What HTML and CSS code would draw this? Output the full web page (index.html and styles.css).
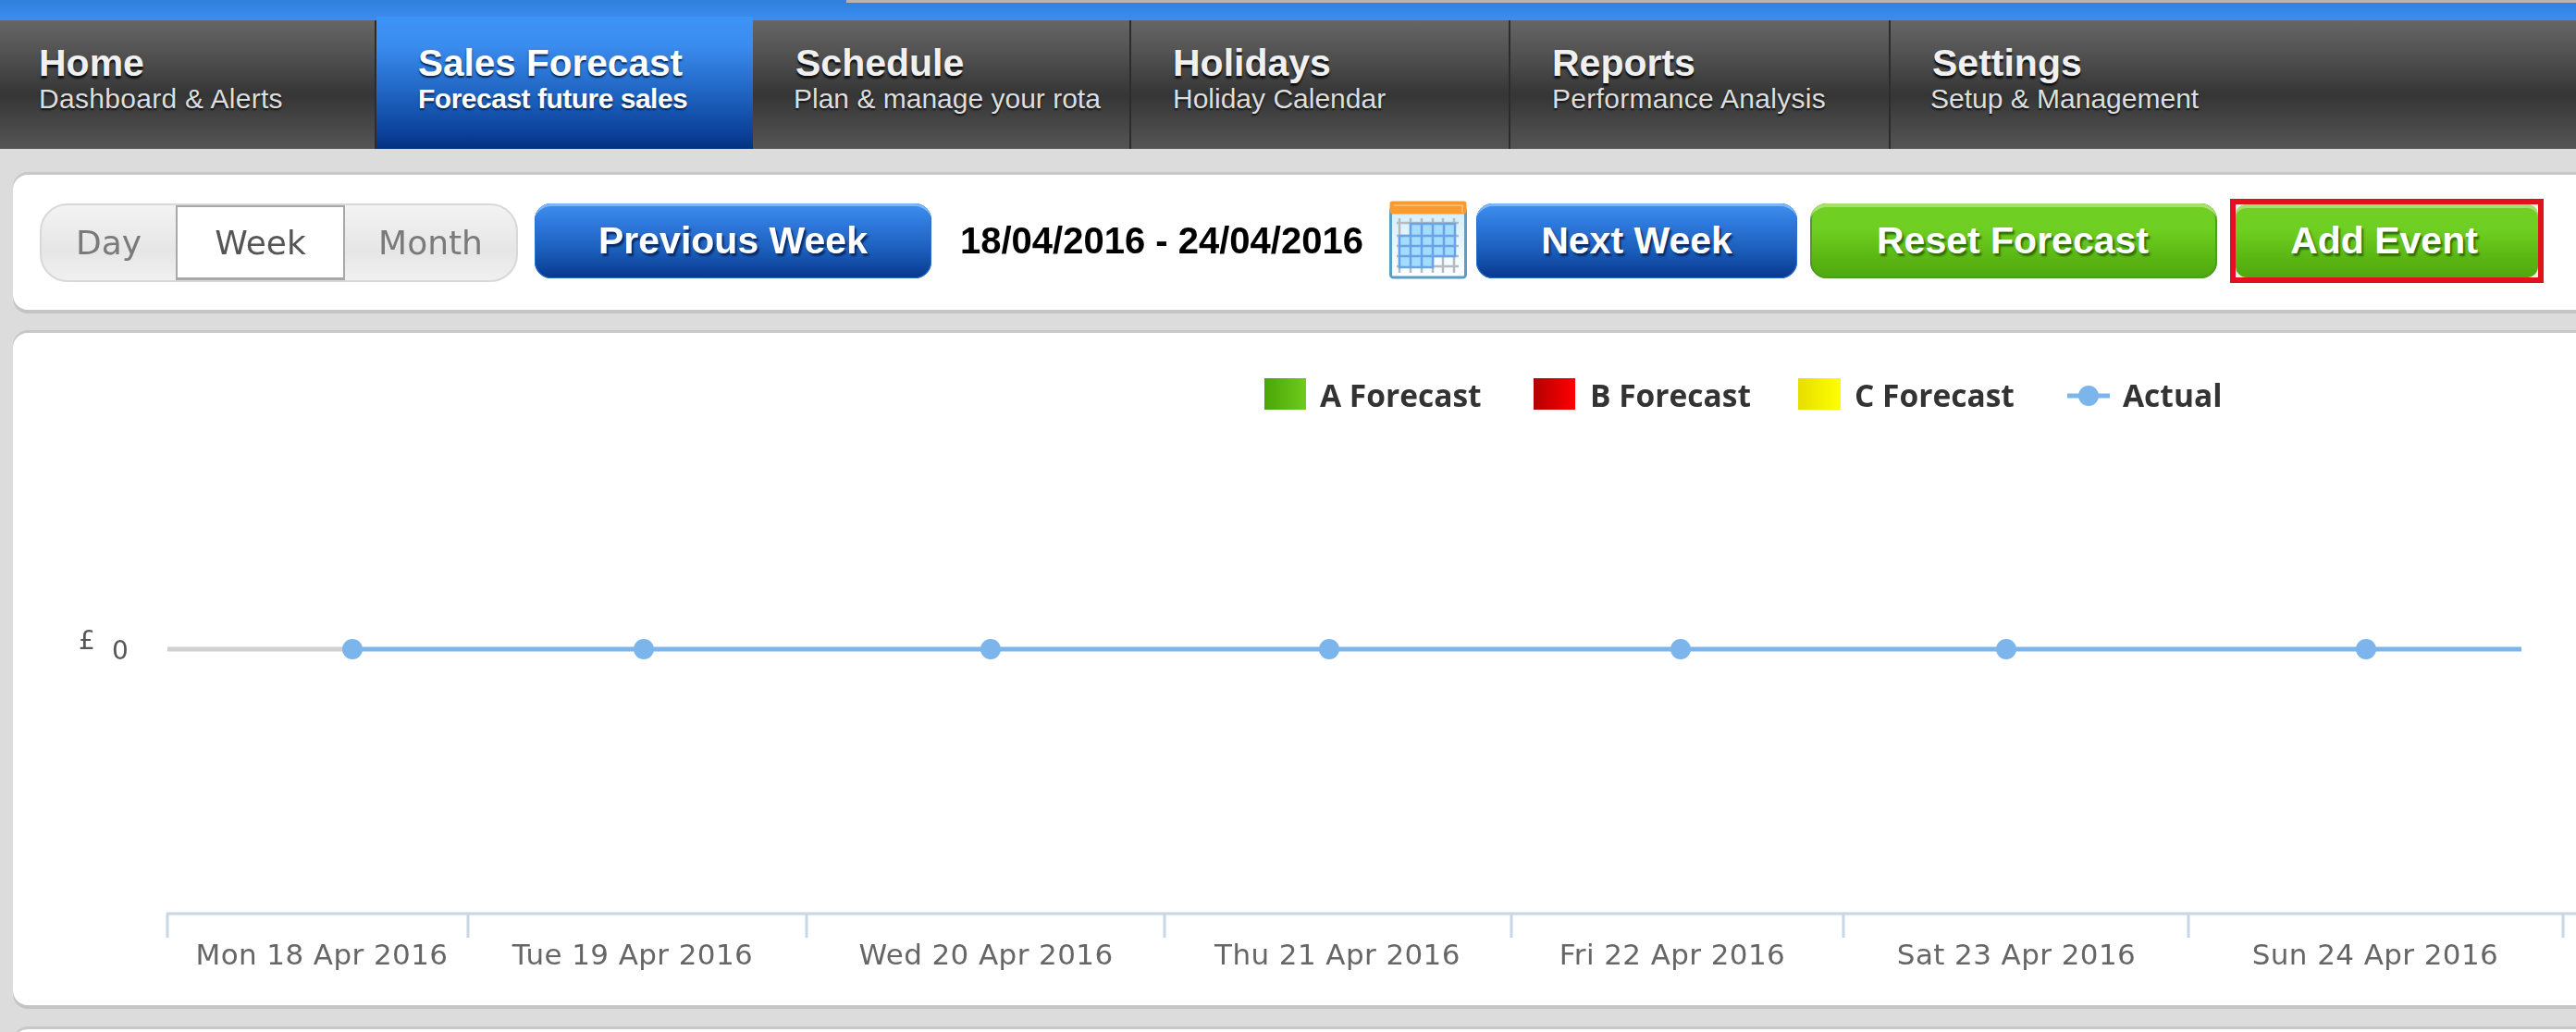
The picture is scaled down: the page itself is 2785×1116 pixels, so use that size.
FILE: index.html
```html
<!DOCTYPE html>
<html lang="en">
<head>
<meta charset="utf-8">
<title>Sales Forecast</title>
<link rel="stylesheet" href="styles.css">
</head>
<body>
<div class="topstrip"><div class="topline"></div></div>
<nav class="nav">
  <a class="tab tab-home"><span class="tab-title">Home</span><span class="tab-sub">Dashboard &amp; Alerts</span></a>
  <a class="tab tab-sales active"><span class="tab-title">Sales Forecast</span><span class="tab-sub">Forecast future sales</span></a>
  <a class="tab tab-schedule"><span class="tab-title">Schedule</span><span class="tab-sub">Plan &amp; manage your rota</span></a>
  <a class="tab tab-holidays"><span class="tab-title">Holidays</span><span class="tab-sub">Holiday Calendar</span></a>
  <a class="tab tab-reports"><span class="tab-title">Reports</span><span class="tab-sub">Performance Analysis</span></a>
  <a class="tab tab-settings"><span class="tab-title">Settings</span><span class="tab-sub">Setup &amp; Management</span></a>
</nav>
<main class="content">
  <section class="card toolbar">
    <div class="toggle">
      <span class="seg seg-day">Day</span>
      <span class="seg seg-week">Week</span>
      <span class="seg seg-month">Month</span>
    </div>
    <button class="btn btn-blue btn-prev">Previous Week</button>
    <span class="daterange">18/04/2016 - 24/04/2016</span>
    <svg class="cal" width="84" height="85" viewBox="0 0 84 85">
      <defs>
        <linearGradient id="calbg" x1="0" y1="0" x2="0" y2="1">
          <stop offset="0" stop-color="#cfeefe"/>
          <stop offset="1" stop-color="#ffffff"/>
        </linearGradient>
      </defs>
      <rect x="1.5" y="8" width="81" height="75" rx="3" fill="url(#calbg)" stroke="#5b9dc4" stroke-width="3"/>
      <path d="M11 19v59M23 19v59M35 19v59M47 19v59M58 19v59M70 19v59M8 24h67M8 38h67M8 49h67M8 60h67M8 71h67" fill="none" stroke="#b4babd" stroke-width="2.5"/>
      <path d="M23 25H71V60H47V72H11V38H23Z" fill="#a3dcfc"/>
      <path d="M23 25H71V60H47V72H11V38H23ZM23 38H71M11 49H71M11 60H47M23 38V72M35 25V72M47 25V60M59 25V60" fill="none" stroke="#6aa3e6" stroke-width="2.5"/>
      <rect x="0.5" y="0.5" width="83" height="14" rx="3" fill="#fd9a2d"/>
      <path d="M5 5h74v8" stroke="#ffc37e" stroke-width="1.5" fill="none"/>
    </svg>
    <button class="btn btn-blue btn-next">Next Week</button>
    <button class="btn btn-green btn-reset">Reset Forecast</button>
    <div class="highlight"><button class="btn btn-green btn-add">Add Event</button></div>
  </section>

  <section class="card chart">
    <svg class="chart-svg" width="2771" height="727" viewBox="0 0 2771 727">
      <defs>
        <linearGradient id="swa"><stop offset="0" stop-color="#4aa508"/><stop offset="1" stop-color="#6fcb1c"/></linearGradient>
        <linearGradient id="swb"><stop offset="0" stop-color="#b40000"/><stop offset="1" stop-color="#ff0000"/></linearGradient>
        <linearGradient id="swc"><stop offset="0" stop-color="#e6de00"/><stop offset="1" stop-color="#ffff00"/></linearGradient>
      </defs>
      <g transform="translate(-14 -360)">
        <rect x="1367" y="409" width="45" height="34" fill="url(#swa)"/>
        <text class="legend" x="1427" y="440">A Forecast</text>
        <rect x="1658" y="409" width="45" height="34" fill="url(#swb)"/>
        <text class="legend" x="1719" y="440">B Forecast</text>
        <rect x="1944" y="409" width="46" height="34" fill="url(#swc)"/>
        <text class="legend" x="2005" y="440">C Forecast</text>
        <path class="line-blue" d="M2235 428h46"/>
        <circle class="dot" cx="2258" cy="428" r="11"/>
        <text class="legend" x="2295" y="440">Actual</text>

        <text class="axis-unit" x="85" y="702">£</text>
        <text class="axis-zero" x="121" y="713">0</text>
        <path class="line-grid" d="M181 702H381"/>
        <path class="line-blue" d="M381 702H2726"/>
        <circle class="dot" cx="381" cy="702" r="11"/>
        <circle class="dot" cx="696" cy="702" r="11"/>
        <circle class="dot" cx="1071" cy="702" r="11"/>
        <circle class="dot" cx="1437" cy="702" r="11"/>
        <circle class="dot" cx="1817" cy="702" r="11"/>
        <circle class="dot" cx="2169" cy="702" r="11"/>
        <circle class="dot" cx="2558" cy="702" r="11"/>

        <path class="axis" d="M180 988H2785M181 988v26M506 988v26M872 988v26M1259 988v26M1634 988v26M1993 988v26M2366 988v26M2771 988v26"/>
        <text class="xlabel" x="348" y="1043">Mon 18 Apr 2016</text>
        <text class="xlabel" x="684" y="1043">Tue 19 Apr 2016</text>
        <text class="xlabel" x="1066" y="1043">Wed 20 Apr 2016</text>
        <text class="xlabel" x="1446" y="1043">Thu 21 Apr 2016</text>
        <text class="xlabel" x="1808" y="1043">Fri 22 Apr 2016</text>
        <text class="xlabel" x="2180" y="1043">Sat 23 Apr 2016</text>
        <text class="xlabel" x="2568" y="1043">Sun 24 Apr 2016</text>
      </g>
    </svg>
  </section>
  <section class="card next-card"></section>
</main>
</body>
</html>
```
FILE: styles.css
```css
* { box-sizing: border-box; }
html, body { margin: 0; height: 100%; overflow: hidden; }
body { background: #dcdcdc; font-family: "Liberation Sans", Arial, sans-serif; width: 2785px; height: 1116px; filter: blur(0.7px); }

.topstrip { height: 22px; background: linear-gradient(#2f7fdd, #3b8def); padding-left: 915px; }
.topline { height: 3px; background: #b8b4ac; }

.nav { display: flex; height: 139px; background: linear-gradient(#666 0%, #4a4a4a 35%, #353535 58%, #464646 80%, #555 100%); position: relative; }
.tab { display: flex; flex-direction: column; border-right: 2px solid #2c2c2c; color: #eee; padding-top: 24px; }
.tab-home { width: 407px; padding-left: 42px; }
.tab-sales { width: 407px; padding-left: 45px; }
.tab-schedule { width: 409px; padding-left: 46px; }
.tab-holidays { width: 410px; padding-left: 45px; }
.tab-reports { width: 411px; padding-left: 45px; }
.tab-settings { flex: 1; padding-left: 45px; border-right: 0; }
.tab-title { font-size: 41px; font-weight: 700; line-height: 44px; color: #f0f0f0; text-shadow: 0 3px 2px #111; }
.tab-sub { font-size: 30px; line-height: 34px; color: #dedede; text-shadow: 0 2px 2px #111; white-space: nowrap; }
.tab-home .tab-sub, .tab-reports .tab-sub { letter-spacing: 0.3px; }
.tab-schedule .tab-sub { margin-left: -2px; }
.tab-settings .tab-sub { margin-left: -2px; }
.active { margin-top: -4px; height: 143px; padding-top: 28px; border-right: 0; background: linear-gradient(#3d93f6 0%, #3a8cee 22%, #1a5cb8 65%, #0a3f98 90%, #02307f 100%); }
.active .tab-title, .active .tab-sub { color: #fff; text-shadow: 0 2px 2px #06234f; }
.active .tab-title { font-size: 40.5px; }
.active .tab-sub { font-weight: 700; letter-spacing: -0.5px; }

.content { padding: 28px 0 0 14px; display: flex; flex-direction: column; }
.card { background: #fff; border-radius: 16px 0 0 16px; box-shadow: 0 -3px 0 #c8c8c8, 0 4px 0 #c4c4c4; }

.toolbar { height: 146px; display: flex; align-items: flex-start; padding: 26px 0 0 29px; }
.toggle { display: flex; width: 517px; height: 85px; margin-top: 5px; border: 2px solid #d8d8d8; border-radius: 30px; overflow: hidden; background: linear-gradient(#f3f3f3, #e6e6e6 60%, #f0f0f0); font-family: "DejaVu Sans", sans-serif; font-size: 36px; color: #7a7a7a; }
.seg { display: flex; align-items: center; justify-content: center; height: 100%; }
.seg-day { width: 145px; }
.seg-week { width: 183px; background: #fff; color: #555; border: 2px solid #a8a8a8; border-bottom-width: 3px; }
.seg-month { flex: 1; }

.btn { height: 81px; margin: 5px 0 0; border-radius: 18px; border: 0; font-family: "Liberation Sans", Arial, sans-serif; font-size: 41px; font-weight: 700; color: #fff; padding: 0; }
.btn-blue { background: linear-gradient(#3f8ff0 0%, #2f7ade 25%, #1a5cb8 65%, #07378d 100%); box-shadow: inset 0 4px 0 -1px #7fb5f5, inset 0 0 0 1px #2a6fd0; text-shadow: 2px 3px 2px #0a2a66; }
.btn-green { background: linear-gradient(#72d024 0%, #6fce22 35%, #5cb814 70%, #4fa80e 100%); box-shadow: inset 0 5px 0 -1px #a8e070, inset 0 0 0 2px #4f9c25; text-shadow: 2px 3px 2px #2e6c08; }
.btn-prev { width: 429px; margin-left: 18px; }
.daterange { margin: 5px 0 0 31px; width: 464px; line-height: 81px; font-size: 40px; font-weight: 700; color: #000; white-space: nowrap; }
.cal { flex: none; margin-top: 2px; }
.btn-next { width: 347px; margin-left: 10px; }
.btn-reset { width: 440px; margin-left: 14px; padding-right: 2px; }
.highlight { width: 339px; height: 91px; margin-left: 14px; border: 6px solid #e4101e; background: #eef5e8; }
.btn-add { width: 100%; height: 100%; margin: 0; padding-right: 6px; border-radius: 12px; box-shadow: inset 0 5px 0 -1px #a8e070; }

.chart { height: 727px; margin-top: 25px; overflow: hidden; }
.chart-svg { display: block; }
.next-card { height: 20px; margin-top: 26px; border-radius: 16px 0 0 0; }

.legend { font-family: "Open Sans", sans-serif; font-size: 33.5px; font-weight: 700; fill: #333; }
.line-blue { stroke: #7cb5ec; stroke-width: 5; fill: none; }
.line-grid { stroke: #d0d0d0; stroke-width: 5; fill: none; }
.dot { fill: #7cb5ec; }
.axis { stroke: #c8d6e6; stroke-width: 3; fill: none; }
.axis-unit, .axis-zero { font-family: "DejaVu Sans", sans-serif; font-size: 28px; fill: #555; }
.xlabel { font-family: "DejaVu Sans", sans-serif; font-size: 31px; letter-spacing: 0.4px; fill: #666; text-anchor: middle; }
```
